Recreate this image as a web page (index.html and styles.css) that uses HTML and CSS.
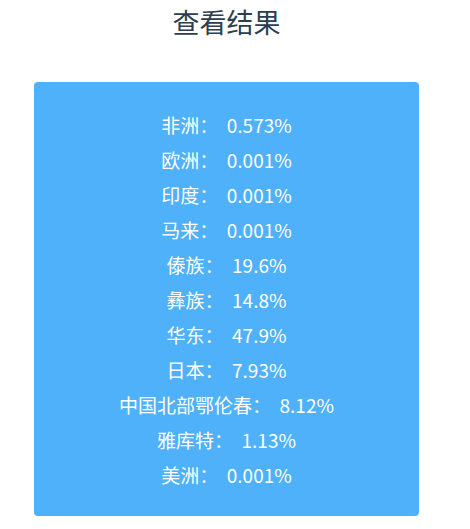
FILE: index.html
```html
<!DOCTYPE html>
<html lang="zh">
<head>
<meta charset="utf-8">
<link rel="stylesheet" href="styles.css">
</head>
<body>
<div class="page">
  <h1 class="title">查看结果</h1>
  <div class="card">
    <div class="row">非洲：&nbsp; 0.573%</div>
    <div class="row">欧洲：&nbsp; 0.001%</div>
    <div class="row">印度：&nbsp; 0.001%</div>
    <div class="row">马来：&nbsp; 0.001%</div>
    <div class="row">傣族：&nbsp; 19.6%</div>
    <div class="row">彝族：&nbsp; 14.8%</div>
    <div class="row">华东：&nbsp; 47.9%</div>
    <div class="row">日本：&nbsp; 7.93%</div>
    <div class="row">中国北部鄂伦春：&nbsp; 8.12%</div>
    <div class="row">雅库特：&nbsp; 1.13%</div>
    <div class="row">美洲：&nbsp; 0.001%</div>
  </div>
</div>
</body>
</html>
```
FILE: styles.css
```css
html, body {
  margin: 0;
  padding: 0;
  background: #ffffff;
}
.page {
  width: 453px;
  font-family: "Noto Sans CJK SC", "Noto Sans", sans-serif;
}
.title {
  margin: 0;
  font-size: 27px;
  font-weight: 400;
  line-height: 44px;
  color: #2c3e50;
  text-align: center;
}
.card {
  margin: 38px 34px 0 34px;
  background: #4fb1f9;
  border-radius: 4px;
  padding: 25px 0 24px;
  display: flex;
  flex-direction: column;
  align-items: center;
}
.row {
  font-size: 19px;
  line-height: 35px;
  color: #ffffff;
  white-space: nowrap;
}
```
